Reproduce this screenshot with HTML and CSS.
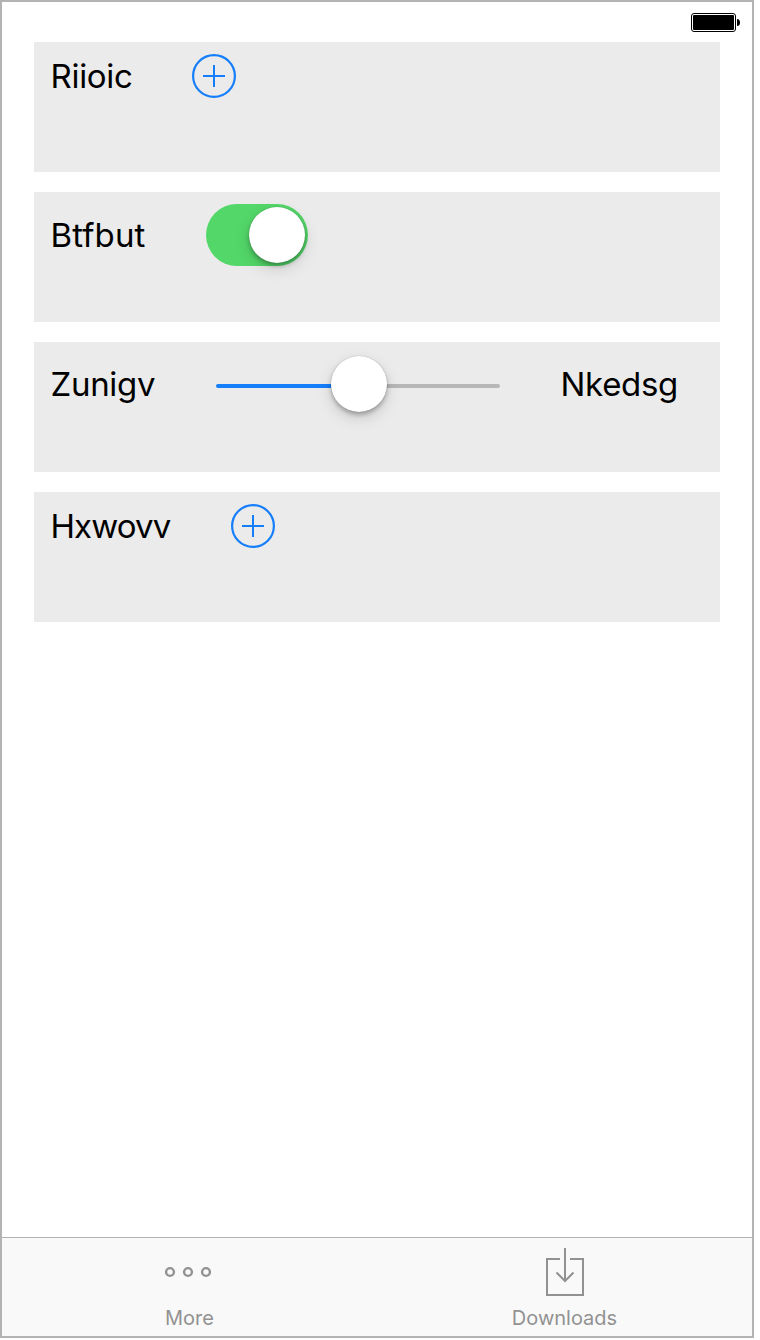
FILE: index.html
```html
<!DOCTYPE html>
<html lang="en">
<head>
<meta charset="utf-8">
<title>Controls</title>
<link rel="stylesheet" href="styles.css">
</head>
<body>
<div class="screen">
  <header class="status">
    <svg class="battery" width="49" height="19" viewBox="0 0 49 19">
      <rect x=".5" y=".5" width="44" height="18" rx="2.5" fill="#fff" stroke="#000"/>
      <rect x="2" y="2" width="41" height="15" rx="1" fill="#000"/>
      <path d="M46 6 Q49 6 49 9.500 Q49 13 46 13Z" fill="#000"/>
    </svg>
  </header>
  <main class="cards">
    <section class="card">
      <div class="row row-button">
        <span class="label label-riioic">Riioic</span>
        <svg class="add" width="44" height="44" viewBox="0 0 44 44"><circle cx="22" cy="22" r="20.900"/><path d="M11 22H33M22 11V33"/></svg>
      </div>
    </section>
    <section class="card">
      <div class="row row-switch">
        <span class="label label-btfbut">Btfbut</span>
        <div class="switch"><div class="knob"></div></div>
      </div>
    </section>
    <section class="card">
      <div class="row row-slider">
        <span class="label label-zunigv">Zunigv</span>
        <div class="slider"><div class="track track-on"></div><div class="knob"></div><div class="track"></div></div>
        <span class="label label-nkedsg">Nkedsg</span>
      </div>
    </section>
    <section class="card">
      <div class="row row-button">
        <span class="label label-hxwovv">Hxwovv</span>
        <svg class="add" width="44" height="44" viewBox="0 0 44 44"><circle cx="22" cy="22" r="20.900"/><path d="M11 22H33M22 11V33"/></svg>
      </div>
    </section>
  </main>
  <nav class="tabs">
    <div class="tab">
      <svg class="dots" width="52" height="52" viewBox="0 0 52 52"><circle cx="6" cy="26" r="3.900"/><circle cx="24" cy="26" r="3.900"/><circle cx="42" cy="26" r="3.900"/></svg>
      <span class="tab-text tab-more">More</span>
    </div>
    <div class="tab">
      <svg width="40" height="52" viewBox="0 0 40 52"><path d="M15 13H2V49H38V13H25M20 2V35M11.500 26.500L20 35L28.500 26.500"/></svg>
      <span class="tab-text tab-downloads">Downloads</span>
    </div>
  </nav>
</div>
</body>
</html>
```
FILE: styles.css
```css
* { box-sizing: border-box; }
body { margin: 0; background: #fff; font-family: Inter, "Liberation Sans", sans-serif; }
svg { display: block; flex: none; }
.screen { width: 754px; height: 1338px; border: 2px solid #b3b3b3; display: flex; flex-direction: column; }
.status { height: 40px; padding: 11px 12px 0 0; display: flex; justify-content: flex-end; }
.cards { flex: 1; padding: 0 32px; display: flex; flex-direction: column; gap: 20px; }
.card { height: 130px; background: #ebebeb; padding: 12px 16px; }
.row { display: flex; align-items: center; gap: 60px; }
.row-button { height: 44px; }
.row-switch { height: 62px; }
.row-slider { height: 60px; }
.label { flex: none; font-size: 33px; line-height: 40px; color: #000; white-space: nowrap; letter-spacing: -.3px; padding-left: .5px; }
.label-riioic { width: 82px; }
.label-btfbut { width: 96px; letter-spacing: .1px; }
.label-zunigv { width: 106px; }
.label-nkedsg { width: 118px; }
.label-hxwovv { width: 121px; letter-spacing: -.9px; }
.add { fill: none; stroke: #147efb; stroke-width: 2.2; }
.add path { stroke-width: 2; }
.switch { width: 102px; height: 62px; border-radius: 31px; background: #53d769; display: flex; align-items: center; justify-content: flex-end; padding-right: 3px; }
.knob { flex: none; width: 56px; height: 56px; border-radius: 50%; background: #fff; box-shadow: 0 0 1px rgba(0,0,0,.3), 0 3px 4px rgba(0,0,0,.25), 0 6px 16px rgba(0,0,0,.14); }
.slider { width: 284px; padding-top: 4px; display: flex; align-items: center; }
.slider .knob { margin-top: -4px; z-index: 1; }
.track { flex: 1; height: 4px; border-radius: 0 2px 2px 0; background: #b7b7b7; }
.track-on { border-radius: 2px 0 0 2px; flex: 0 0 115px; background: #147efb; }
.tabs { height: 99px; border-top: 1px solid #b2b2b2; background: #f9f9f9; display: flex; }
.tab { width: 376px; padding-top: 8px; display: flex; flex-direction: column; align-items: center; }
.tab svg { fill: none; stroke: #929292; stroke-width: 2; }
.tab .dots { stroke-width: 2.4; }
.tab-text { margin-top: 8px; font-size: 20px; line-height: 24px; color: #929292; letter-spacing: 0; white-space: nowrap; }
```
